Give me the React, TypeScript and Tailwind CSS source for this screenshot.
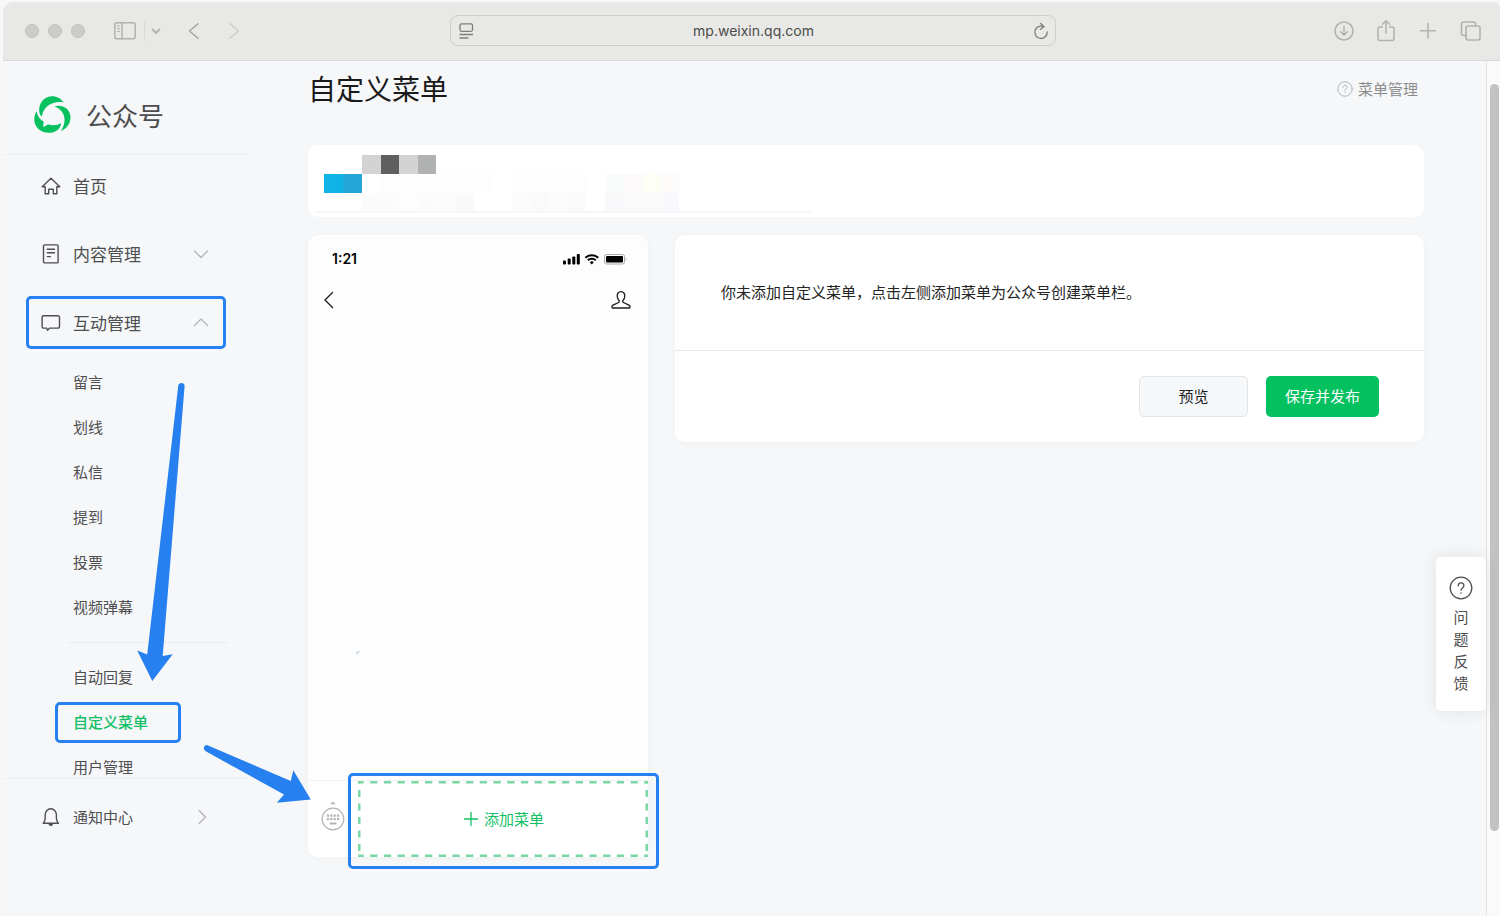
import React from "react";

const mosaic: [number, number, number, number, string][] = [
  [54, 10, 19, 19, "#d3d3d3"],
  [73, 10, 18, 19, "#5f5f5f"],
  [91, 10, 19, 19, "#d3d3d3"],
  [110, 10, 18, 19, "#b0b2b1"],
  [16, 29, 19, 19, "#0fb3e6"],
  [35, 29, 19, 19, "#26a7da"],
  [73, 29, 56, 19, "#fdfdfd"],
  [129, 29, 56, 19, "#fdfdfe"],
  [204, 29, 74, 19, "#fdfdfd"],
  [297, 29, 19, 19, "#fafcfb"],
  [316, 29, 18, 19, "#fdfafb"],
  [334, 29, 19, 19, "#fdfef6"],
  [353, 29, 18, 19, "#fdfcfb"],
  [54, 48, 37, 18, "#fbfbfb"],
  [91, 48, 19, 18, "#fdfdfd"],
  [110, 48, 18, 18, "#fbfbfc"],
  [128, 48, 20, 18, "#fcfcfc"],
  [148, 48, 18, 18, "#f9f9f9"],
  [204, 48, 18, 18, "#fcfcfd"],
  [222, 48, 19, 18, "#fafafa"],
  [241, 48, 18, 18, "#fcfcfc"],
  [259, 48, 19, 18, "#fafafa"],
  [297, 48, 19, 18, "#f9f9fc"],
  [316, 48, 37, 18, "#fafafa"],
  [353, 48, 18, 18, "#f9f9fd"],
];

const line = { fill: "none", stroke: "currentColor", strokeLinecap: "round", strokeLinejoin: "round" } as const;

function Logo() {
  return (
    <svg className="h-[37px] w-[37px] shrink-0" viewBox="0 0 37 37" fill="#07c160" aria-hidden="true">
      <path d="M6.800 19.800C5.700 18.200 5.100 15.800 5.200 13.500 5.500 6 11 .2 18 .2c5 0 9.300 2.300 11.600 6.300-10-2-19.600 3.200-21.500 12.900-.2 1-.8 1.100-1.300.4z" />
      <path d="M20.300 10.300c8.700-2.600 16.200 2.900 16.200 11 0 6.300-3.600 11.200-9.700 13.700 5.500-7.400 6.300-19.600-6.500-24.700z" />
      <path d="M2.700 15.300c.4 4.200 2.500 7.600 6.400 9.900.5.300.7.700.6 1.200l-.6 3.700c-.1.600.3.800.8.600l3.600-2c.4-.2.800-.2 1.200-.1 4.500 1 8.800.6 12.500-1.400-.5 5.600-5.600 9.600-12.700 9.600C6.600 36.800.3 31 .3 23.500c0-3.100.9-5.900 2.400-8.200z" />
    </svg>
  );
}

function HomeIcon() {
  return (
    <svg className="h-5 w-5 shrink-0" viewBox="0 0 20 20" {...line} strokeWidth="1.400" aria-hidden="true">
      <path d="M1.200 10.800 10 2.200l8.800 8.600h-3V17.800h-3.500v-4.600H7.700v4.600H4.200v-7z" />
    </svg>
  );
}

function DocIcon() {
  return (
    <svg className="h-5 w-5 shrink-0" viewBox="0 0 20 20" {...line} strokeWidth="1.400" aria-hidden="true">
      <rect x="2.500" y=".9" width="14.600" height="18" rx="1" />
      <path d="M6.300 5.300h7.200M6.300 8.800h7.200M6.300 12.600h3.200" />
    </svg>
  );
}

function ChatIcon() {
  return (
    <svg className="h-5 w-5 shrink-0" viewBox="0 0 20 20" {...line} strokeWidth="1.400" aria-hidden="true">
      <path d="M2.600 2.700h14.400a1.500 1.500 0 0 1 1.500 1.500v9.400a1.500 1.500 0 0 1-1.500 1.500H8.700l-2.200 2.200-.9-2.200h-3a1.500 1.500 0 0 1-1.500-1.500V4.200a1.500 1.500 0 0 1 1.500-1.500z" />
    </svg>
  );
}

function BellIcon() {
  return (
    <svg className="h-5 w-5 shrink-0" viewBox="0 0 20 20" {...line} strokeWidth="1.400" aria-hidden="true">
      <path d="M2.200 16.300h15.200c-1.400-1.600-2-2.900-2-5.300V7.800C15.400 4.300 12.800 1.700 9.800 1.700S4.200 4.300 4.200 7.800V11c0 2.400-.6 3.700-2 5.300z" />
      <path d="M8.200 17c.2 1.700 3 1.700 3.200 0z" fill="currentColor" />
    </svg>
  );
}

function Chevron({ dir }: { dir: "up" | "down" | "right" }) {
  const d = { up: "m1.500 10.500 6.500-6.500 6.500 6.500", down: "m1.500 5 6.500 6.500L14.500 5", right: "m5 1.500 6.500 6.500L5 14.500" }[dir];
  return (
    <svg className="h-4 w-4 shrink-0 text-[#b4b5b7]" viewBox="0 0 16 16" {...line} strokeWidth="1.300" aria-hidden="true">
      <path d={d} />
    </svg>
  );
}

function Toolbar() {
  return (
    <header className="grid h-[59px] shrink-0 grid-cols-[447px_1fr_444px] items-center rounded-tl-[10px] rounded-tr-[6px] border-b border-[#d5d8de] bg-[#e8e8e6] pb-px text-[#b1b1af]">
      <div className="flex items-center">
        <div className="flex gap-[9px] pl-[22px]">
          <span className="h-[14px] w-[14px] rounded-full border border-[#c0c0be] bg-[#cccccb]" />
          <span className="h-[14px] w-[14px] rounded-full border border-[#c0c0be] bg-[#cccccb]" />
          <span className="h-[14px] w-[14px] rounded-full border border-[#c0c0be] bg-[#cccccb]" />
        </div>
        <button type="button" aria-label="边栏" className="ml-7">
          <svg className="block h-5 w-6" viewBox="0 0 24 20" {...line} strokeWidth="1.500">
            <rect x="1.800" y="1.800" width="20.400" height="16" rx="2" />
            <path d="M9 2v16" />
            <path d="M4.300 5h2.200M4.300 7.700h2.200M4.300 10.400h2.200" strokeWidth="1" />
          </svg>
        </button>
        <span className="ml-[7px] h-5 w-px bg-[#dadad8]" />
        <button type="button" aria-label="标签页组" className="ml-[5px]">
          <svg className="block h-3 w-3" viewBox="0 0 12 12" {...line} strokeWidth="1.800">
            <path d="m2.500 4.500 3.500 3.500 3.500-3.500" />
          </svg>
        </button>
        <button type="button" aria-label="后退" className="ml-[22px] text-[#a4a4a2]">
          <svg className="block h-5 w-5" viewBox="0 0 20 20" {...line} strokeWidth="1.500">
            <path d="m14 2.700-8.500 7.300 8.500 7.300" />
          </svg>
        </button>
        <button type="button" aria-label="前进" className="ml-5 text-[#cbcbc9]">
          <svg className="block h-5 w-5" viewBox="0 0 20 20" {...line} strokeWidth="1.500">
            <path d="m6 2.700 8.500 7.300L6 17.300" />
          </svg>
        </button>
      </div>

      <div className="flex h-[31px] items-center rounded-lg border border-[#cdcdcb] pr-[5px] pl-2 text-[#7d7d7b]">
        <svg className="h-4 w-4" viewBox="0 0 16 16" {...line} strokeWidth="1.300" aria-hidden="true">
          <rect x="1" y=".8" width="12.500" height="7.500" rx="1.500" />
          <path d="M1 11.500h12.500M1 15h8" />
        </svg>
        <input
          aria-label="地址"
          readOnly
          value="mp.weixin.qq.com"
          className="min-w-0 flex-1 bg-transparent text-center font-[Inter,sans-serif] text-sm text-[#4b4b4a] outline-none"
        />
        <button type="button" aria-label="重新载入">
          <svg className="block h-[18px] w-[18px]" viewBox="0 0 18 18" {...line} strokeWidth="1.300">
            <path d="M11.500 4.600A6.200 6.200 0 1 0 15.200 10M8.600 1.500l3.500 3.200-3.700 2.600" />
          </svg>
        </button>
      </div>

      <div className="flex items-center justify-end gap-[18px] pr-[18px]">
        <button type="button" aria-label="下载">
          <svg className="block h-6 w-6" viewBox="0 0 24 24" {...line} strokeWidth="1.500">
            <circle cx="12" cy="12" r="9" />
            <path d="M12 7.500v8.500M8.500 12.800 12 16.200l3.500-3.400" />
          </svg>
        </button>
        <button type="button" aria-label="共享">
          <svg className="block h-6 w-6" viewBox="0 0 24 24" {...line} strokeWidth="1.500">
            <path d="M8.500 8H6a2 2 0 0 0-2 2v9.500a2 2 0 0 0 2 2h12a2 2 0 0 0 2-2V10a2 2 0 0 0-2-2h-2.500M12 14V2M8.500 5.200 12 1.800l3.500 3.400" />
          </svg>
        </button>
        <button type="button" aria-label="新标签页">
          <svg className="block h-6 w-6" viewBox="0 0 24 24" {...line} strokeWidth="1.600">
            <path d="M12 4.500v14.500M4.700 11.700h14.500" />
          </svg>
        </button>
        <button type="button" aria-label="标签页概览">
          <svg className="block h-6 w-6" viewBox="0 0 24 24" {...line} strokeWidth="1.600">
            <rect x="8" y="7" width="14" height="14" rx="2" />
            <path d="M8 16.500H5.500a2 2 0 0 1-2-2V5a2 2 0 0 1 2-2h10a2 2 0 0 1 2 2v2" />
          </svg>
        </button>
      </div>
    </header>
  );
}

function SubItem({ label, active = false }: { label: string; active?: boolean }) {
  return (
    <li className="relative flex h-[45px] items-center">
      <a href="#" className={active ? "pl-[70px] text-[15px] font-medium text-[#12bf66]" : "pl-[70px] text-[15px] text-[#4e4f51]"}>
        {label}
      </a>
      {active && <span className="pointer-events-none absolute top-[2px] left-[52px] h-[41px] w-[126px] rounded-[5px] border-3 border-[#2680f0]" />}
    </li>
  );
}

function Sidebar() {
  return (
    <aside className="flex w-[245px] shrink-0 flex-col text-[#4e4f51]">
      <a href="#" className="flex h-[94px] shrink-0 items-center gap-[15px] border-b border-[#eceef0] pt-[14px] pl-[31px]">
        <Logo />
        <span className="text-[26px] leading-9 text-[#4c4d4f]">公众号</span>
      </a>
      <nav className="min-h-0 flex-1 overflow-hidden pt-[5px]">
        <div className="flex flex-col gap-4 pr-[22px] pl-[23px] text-[17px]">
          <a href="#" className="flex h-[52px] items-center gap-3 pl-[15px]">
            <HomeIcon />
            首页
          </a>
          <button type="button" className="flex h-[52px] items-center gap-3 pr-[17px] pl-[15px]">
            <DocIcon />
            <span className="flex-1 text-left">内容管理</span>
            <Chevron dir="down" />
          </button>
          <button type="button" className="flex h-[53px] items-center gap-3 rounded-[5px] border-3 border-[#2680f0] pr-[14px] pl-3">
            <ChatIcon />
            <span className="flex-1 text-left">互动管理</span>
            <Chevron dir="up" />
          </button>
        </div>
        <ul className="mt-[11px]">
          <SubItem label="留言" />
          <SubItem label="划线" />
          <SubItem label="私信" />
          <SubItem label="提到" />
          <SubItem label="投票" />
          <SubItem label="视频弹幕" />
        </ul>
        <hr className="my-3 mr-5 ml-[65px] border-[#eaecee]" />
        <ul>
          <SubItem label="自动回复" />
          <SubItem label="自定义菜单" active />
          <SubItem label="用户管理" />
        </ul>
      </nav>
      <div className="h-[138px] shrink-0 border-t border-[#eceef0] pt-3">
        <a href="#" className="flex h-[52px] items-center gap-3 pr-[38px] pl-[38px] text-[15px]">
          <BellIcon />
          <span className="flex-1">通知中心</span>
          <Chevron dir="right" />
        </a>
      </div>
    </aside>
  );
}

function Phone() {
  return (
    <section className="flex h-[622px] w-[340px] shrink-0 flex-col rounded-[10px] bg-[#fdfdfd] shadow-[0_1px_8px_rgba(0,0,0,0.03)]">
      <div className="flex h-[47px] items-center justify-between pr-[21px] pl-6 text-black">
        <span className="font-[Inter,sans-serif] text-sm font-semibold">1:21</span>
        <svg className="h-3 w-16" viewBox="0 0 64 12" aria-hidden="true">
          <rect x="0" y="7.500" width="3" height="4" rx=".8" />
          <rect x="4.700" y="5.500" width="3" height="6" rx=".8" />
          <rect x="9.300" y="3.500" width="3" height="8" rx=".8" />
          <rect x="13.800" y="1" width="3" height="10.500" rx=".8" />
          <g fill="none" stroke="#000" strokeWidth="2">
            <path d="M22.300 4.700a9.500 9.500 0 0 1 13 0" />
            <path d="M24.800 7.300a5.800 5.800 0 0 1 8 0" />
          </g>
          <path d="M26.800 9.200a2.900 2.900 0 0 1 4 0l-2 2.300z" />
          <rect x="41.500" y="1.500" width="20" height="9.500" rx="2" fill="none" stroke="#aaa" />
          <rect x="43" y="3" width="17" height="6.500" rx="1" />
          <path d="M62.700 4.800v3c1-.4 1-2.600 0-3z" fill="#aaa" />
        </svg>
      </div>
      <div className="flex h-9 items-center justify-between pr-4 pl-[11px] text-[#1c1c1c]">
        <svg className="h-5 w-5" viewBox="0 0 20 20" {...line} strokeWidth="1.400" aria-hidden="true">
          <path d="m13.500 2.500-7.500 7.500 7.500 7.500" />
        </svg>
        <svg className="h-[22px] w-[22px]" viewBox="0 0 22 22" {...line} strokeWidth="1.300" aria-hidden="true">
          <path d="M11 2.700c-2.600 0-3.900 2-3.800 4.300.1 2 .8 3.400 1.800 4.500.5.600.4 1.600-.4 2L3 16.200c-.8.400-1 .8-1 1.500v.8c0 .3.200.5.500.5h17c.3 0 .5-.2.500-.5v-.8c0-.7-.2-1.100-1-1.500l-5.600-2.700c-.8-.4-.9-1.400-.4-2 1-1.100 1.700-2.500 1.800-4.500.1-2.300-1.200-4.300-3.800-4.300z" />
        </svg>
      </div>
      <div className="flex flex-1 items-end pb-[125px] pl-12">
        <svg className="h-1 w-1" viewBox="0 0 4 4" aria-hidden="true">
          <path d="M1 4V1h3" fill="none" stroke="#c3d5e3" strokeWidth="1.200" />
        </svg>
      </div>
      <div className="flex h-[77px] items-stretch rounded-b-[10px] border-t border-[#f3f3f4] bg-white">
        <button type="button" aria-label="键盘" className="flex w-[50px] items-center justify-center pb-1 text-[#b3b3b3]">
          <svg className="h-8 w-6" viewBox="0 0 24 32" aria-hidden="true">
            <path d="m12 .5 2.800 2.800H9.200z" fill="currentColor" />
            <circle cx="12" cy="18" r="10.800" fill="none" stroke="currentColor" strokeWidth="1.200" />
            <path d="M5.800 14.700h12.500M5.800 18.100h12.500" stroke="currentColor" strokeWidth="2.200" strokeDasharray="2.200 1.200" />
            <path d="M8.700 22.500h6.800" stroke="currentColor" strokeWidth="2" />
          </svg>
        </button>
        <button type="button" className="relative flex flex-1 items-center justify-center gap-1 bg-white text-[15px] text-[#12bf66]">
          <svg className="absolute inset-0 h-full w-full" fill="none" stroke="#7ad7a6" strokeWidth="5" aria-hidden="true">
            <line x1="0" y1="0" x2="100%" y2="0" strokeDasharray="7.300 6.400" strokeDashoffset="1.500" />
            <line x1="0" y1="100%" x2="100%" y2="100%" strokeDasharray="7.300 6.400" strokeDashoffset="1.500" />
            <line x1="0" y1="0" x2="0" y2="100%" strokeDasharray="7 6.500" strokeDashoffset="4.500" />
            <line x1="100%" y1="0" x2="100%" y2="100%" strokeDasharray="7 6.500" strokeDashoffset="4.500" />
          </svg>
          <svg className="h-[18px] w-[18px]" viewBox="0 0 18 18" {...line} strokeWidth="1.300" aria-hidden="true">
            <path d="M9 2.500v13M2.500 9h13" />
          </svg>
          添加菜单
          <span className="pointer-events-none absolute -top-2 -right-[11px] -bottom-3 -left-[10px] rounded-[5px] border-3 border-[#2680f0]" />
        </button>
      </div>
    </section>
  );
}

function Content() {
  return (
    <main className="min-w-0 flex-1 pr-[62px] pl-[60px]">
      <div className="flex h-[84px] items-start justify-between pt-[6px] pr-[6px]">
        <h1 className="text-[28px] leading-[42px] text-[#1a1a1a]">自定义菜单</h1>
        <a href="#" className="flex items-center gap-[5px] pt-[10px] text-[15px] leading-6 text-[#8b8c8e]">
          <svg className="h-4 w-4 text-[#b3b4b6]" viewBox="0 0 16 16" {...line} strokeWidth="1" aria-hidden="true">
            <circle cx="8" cy="8" r="7.200" />
            <path d="M6 6.300c0-2.700 4-2.700 4 0 0 1.500-2 1.500-2 3.200M8 11.400v.3" />
          </svg>
          菜单管理
        </a>
      </div>
      <section className="h-[72px] rounded-[10px] bg-white">
        <svg className="h-[72px] w-[520px]" viewBox="0 0 520 72" aria-hidden="true">
          {mosaic.map(([x, y, w, h, fill]) => (
            <rect key={`${x}-${y}`} x={x} y={y} width={w} height={h} fill={fill} />
          ))}
          <rect x="8" y="66" width="495" height="2" fill="#f4f8fb" />
        </svg>
      </section>
      <div className="mt-[18px] flex items-start gap-[27px]">
        <Phone />
        <section className="min-w-0 flex-1 rounded-[10px] bg-white shadow-[0_1px_8px_rgba(0,0,0,0.03)]">
          <p className="flex h-[115px] items-center pl-[46px] text-[15px] text-[#242424]">
            你未添加自定义菜单，点击左侧添加菜单为公众号创建菜单栏。
          </p>
          <div className="flex h-[92px] items-center justify-end gap-[18px] border-t border-[#e8e8e9] pr-[45px] text-[15px]">
            <button type="button" className="h-[41px] w-[109px] rounded-[5px] border border-[#e4e5e7] bg-[#f6f7f9] text-[#1c1c1c]">
              预览
            </button>
            <button type="button" className="h-[41px] w-[113px] rounded-[5px] bg-[#04c160] text-white">
              保存并发布
            </button>
          </div>
        </section>
      </div>
    </main>
  );
}

export default function App() {
  return (
    <div className="relative flex h-screen flex-col bg-[#f7f7f7] pt-[2px] pl-[3px] font-['PingFang_SC','Noto_Sans_CJK_SC',sans-serif]">
      <Toolbar />
      <div className="relative flex min-h-0 flex-1 bg-[#f6f7f9]">
        <Sidebar />
        <Content />
        <div className="w-[14px] shrink-0 border-l border-[#e3e4e6] bg-[#fafafa] pt-[23px] pl-[3px]">
          <div className="h-[747px] w-[9px] rounded-full bg-[#c2c2c2]" />
        </div>
        <button
          type="button"
          className="absolute top-[496px] right-[14px] flex w-[50px] flex-col items-center rounded-[5px] bg-white pt-[19px] pb-[17px] text-[15px] leading-[22px] text-[#4e4f51] shadow-[0_0_18px_rgba(0,0,0,0.09)]"
        >
          <svg className="mb-[6px] h-6 w-6" viewBox="0 0 24 24" {...line} strokeWidth="1.300" aria-hidden="true">
            <circle cx="12" cy="12" r="10.800" />
            <path d="M9.200 9.800c0-3.900 5.700-3.900 5.700 0 0 2.200-2.900 2.200-2.900 4.400M12 16.800v.4" />
          </svg>
          <span className="w-[15px]">问题反馈</span>
        </button>
      </div>
      <svg className="pointer-events-none absolute top-[380px] left-[130px] h-[430px] w-[190px]" viewBox="130 380 190 430" fill="#2680f0" aria-hidden="true">
        <path d="M178.300 385.500c.3-3.500 6.500-3.500 6.300.5L162.700 656l10-1.700L152.300 681 137.200 650.500l10 4z" />
        <path d="M207.500 745.200c-3-1-5.500 4-1.800 6.100L284 794.500l-7.200 8.300 34-3.300-17.500-29.200-2.500 10.700z" />
      </svg>
    </div>
  );
}
